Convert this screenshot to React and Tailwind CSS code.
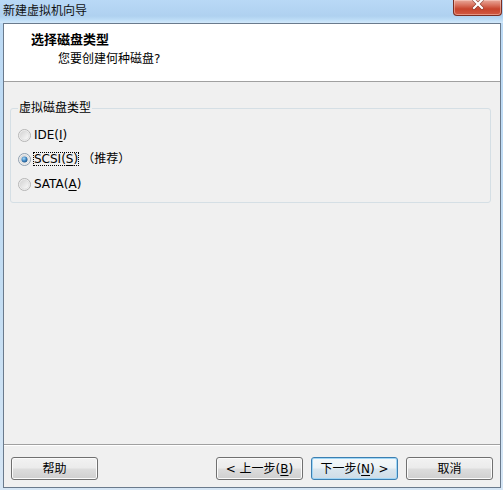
import React from "react";

function Radio({ checked }) {
  const id = checked ? "on" : "off";
  return (
    <svg width="13" height="13" viewBox="0 0 13 13" className="shrink-0">
      <defs>
        <linearGradient id={`rg-${id}`} x1="0" y1="0" x2="1" y2="1">
          <stop offset="0" stopColor="#d2d2d2" />
          <stop offset="1" stopColor="#fcfcfc" />
        </linearGradient>
        <radialGradient id={`dot-${id}`} cx="0.4" cy="0.35" r="0.7">
          <stop offset="0" stopColor="#a9dcfa" />
          <stop offset="0.55" stopColor="#3f86c2" />
          <stop offset="1" stopColor="#1c4f82" />
        </radialGradient>
      </defs>
      <circle cx="6.5" cy="6.5" r="6" fill="#f5f5f5" stroke={checked ? "#8e9eae" : "#b4b4b4"} strokeWidth="1" />
      <circle cx="6.5" cy="6.5" r="4.6" fill={`url(#rg-${id})`} stroke="#dadada" strokeWidth="0.8" />
      {checked && <circle cx="6.5" cy="6.5" r="3" fill={`url(#dot-${id})`} />}
    </svg>
  );
}

function RadioRow({ checked, focus, children, extra, tall }) {
  return (
    <div className={`flex items-center ${tall ? "h-[26px]" : "h-[24px]"}`}>
      <Radio checked={checked} />
      <span
        className={`ml-[2px] flex h-[14px] items-center border px-0 leading-[12px] ${
          focus ? "border-dotted border-black" : "border-transparent"
        }`}
      >
        {children}
      </span>
      {extra}
    </div>
  );
}

function Button({ children, focused }) {
  return (
    <div
      className={`flex h-[23px] w-[87px] items-center justify-center rounded-[3px] border text-[12px] leading-[14px] text-black ${
        focused
          ? "border-[#3c7fb1] bg-[linear-gradient(to_bottom,#f4f8fa_0%,#eaf2f6_48%,#d9e6ee_52%,#cfdce6_100%)] shadow-[inset_0_0_0_1px_#9fd6f6]"
          : "border-[#707070] bg-[linear-gradient(to_bottom,#f2f2f2_0%,#ebebeb_48%,#dddddd_52%,#cfcfcf_100%)] shadow-[inset_0_0_0_1px_#fbfbfb]"
      }`}
    >
      {children}
    </div>
  );
}

export default function App() {
  return (
    <div className="flex h-[490px] w-[503px] flex-col overflow-hidden bg-[linear-gradient(to_bottom,#bcdaf5,#c3ddf3_60%,#d6e6f5)] font-['DejaVu_Sans','Noto_Sans_CJK_SC',sans-serif] text-black">
      {/* Title bar */}
      <div className="flex h-[23px] shrink-0 items-start justify-between bg-[linear-gradient(to_bottom,#b9d9f6_0%,#afd1f0_70%,#bcdcf6_85%,#d3e8fa_100%)]">
        <div className="pl-[3px] pt-[3px] text-[12px] leading-[16px] text-[#111]">新建虚拟机向导</div>
        <div className="mr-[1px] flex h-[16px] w-[49px] items-start justify-center rounded-b-[4px] border border-t-0 border-[#7a2e22] bg-[linear-gradient(to_bottom,#e9a99a_0%,#d8705c_35%,#c7442c_60%,#d25a43_100%)] shadow-[inset_0_0_0_1px_rgba(255,220,210,0.45)]">
          <svg width="12" height="10" viewBox="0 0 12 10">
            <path d="M2 0 L10 8 M10 0 L2 8" stroke="#5e1d12" strokeWidth="3.6" strokeLinecap="square" opacity="0.55" />
            <path d="M2 0 L10 8 M10 0 L2 8" stroke="#ffffff" strokeWidth="2.2" strokeLinecap="square" />
          </svg>
        </div>
      </div>

      {/* Content */}
      <div className="mb-[2px] ml-[3px] mr-[2px] flex h-[465px] flex-col border border-[#6a7a8c] bg-[#f0f0f0]">
        {/* Header */}
        <div className="h-[57px] shrink-0 bg-white pl-[27px] pt-[8px]">
          <div className="text-[13px] font-bold leading-[16px]">选择磁盘类型</div>
          <div className="mt-[3px] pl-[27px] text-[12px] leading-[16px]">您要创建何种磁盘?</div>
        </div>
        <div className="h-px shrink-0 bg-[#a0a0a0]" />

        {/* Body */}
        <div className="flex-1">
          <fieldset className="ml-[6px] mr-[9px] mt-[18px] rounded-[3px] border border-[#d5dfe5] pb-[5px] pl-[7px] pt-[7px]">
            <legend className="px-[1px] text-[12px] leading-[16px]">虚拟磁盘类型</legend>
            <RadioRow checked={false}>
              <span className="text-[12px]">
                IDE(<span className="underline underline-offset-2">I</span>)
              </span>
            </RadioRow>
            <RadioRow
              checked
              focus
              extra={<span className="ml-[3px] text-[12px] leading-[14px]">（推荐）</span>}
            >
              <span className="text-[12px]">
                SCSI(<span className="underline underline-offset-2">S</span>)
              </span>
            </RadioRow>
            <RadioRow checked={false} tall>
              <span className="text-[12px]">
                SATA(<span className="underline underline-offset-2">A</span>)
              </span>
            </RadioRow>
          </fieldset>
        </div>

        {/* Footer */}
        <div className="h-px shrink-0 bg-[#a0a0a0]" />
        <div className="h-px shrink-0 bg-white" />
        <div className="flex h-[41px] shrink-0 items-start pl-[7px] pr-[7px] pt-[11px]">
          <Button>帮助</Button>
          <div className="ml-auto flex gap-[8px]">
            <Button>
              &lt; 上一步(<span className="underline underline-offset-2">B</span>)
            </Button>
            <Button focused>
              下一步(<span className="underline underline-offset-2">N</span>) &gt;
            </Button>
            <Button>取消</Button>
          </div>
        </div>
      </div>
    </div>
  );
}
